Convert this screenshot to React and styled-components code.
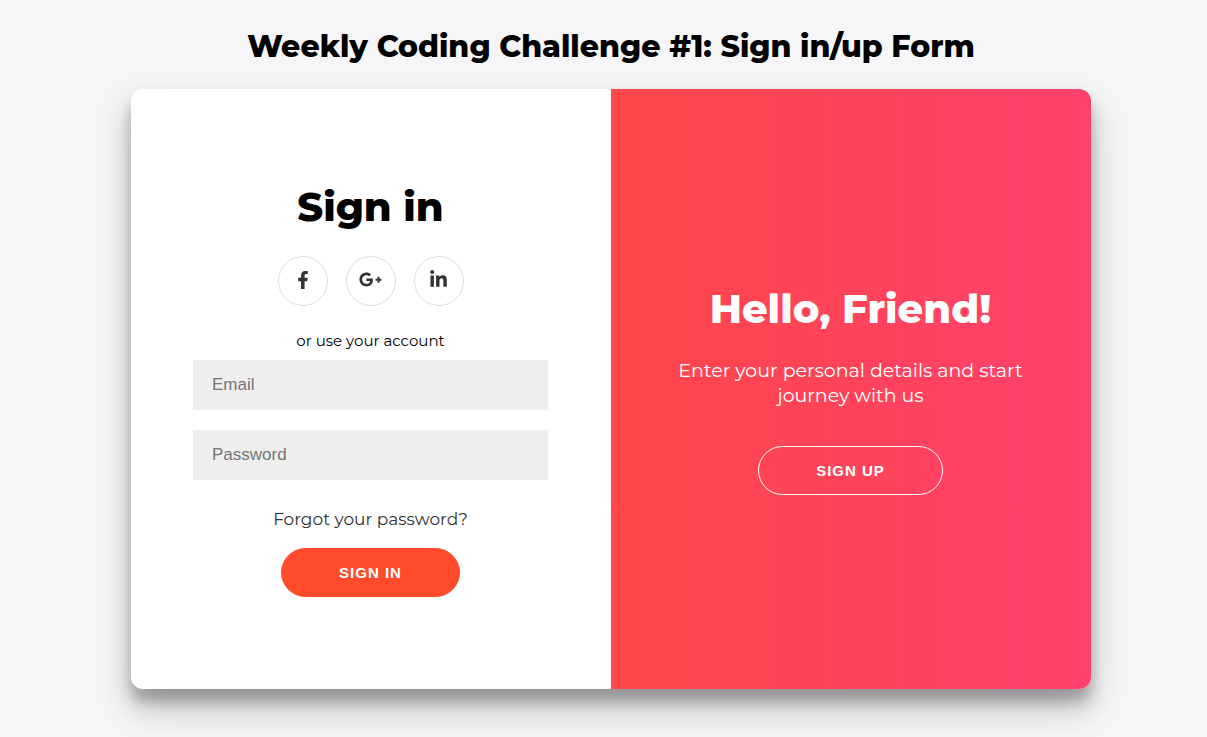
import React from "react";
import styled, { createGlobalStyle } from "styled-components";
import { FaFacebookF, FaGooglePlusG, FaLinkedinIn } from "react-icons/fa";

const GlobalStyle = createGlobalStyle`
  * {
    box-sizing: border-box;
  }

  body {
    margin: 0;
    background: #f6f6f9;
    color: #000;
    font-family: Montserrat, Inter, sans-serif;
  }
`;

const Page = styled.main`
  display: flex;
  flex-direction: column;
  align-items: center;
  min-height: 100vh;
  padding: 29px 0 48px 15px;
`;

const PageTitle = styled.h1`
  margin: 0 0 24px;
  font-size: 30px;
  font-weight: 800;
  line-height: 36px;
  text-align: center;
`;

const Card = styled.div`
  display: grid;
  grid-template-columns: 1fr 1fr;
  width: 100%;
  max-width: 960px;
  min-height: 600px;
  overflow: hidden;
  border-radius: 12px;
  background: #fff;
  box-shadow: 0 18px 35px rgba(0, 0, 0, 0.25), 0 13px 13px rgba(0, 0, 0, 0.22);
`;

const SignInForm = styled.form`
  display: flex;
  flex-direction: column;
  align-items: center;
  justify-content: center;
  padding: 0 63px 0 62px;
`;

const Overlay = styled.section`
  display: flex;
  flex-direction: column;
  align-items: center;
  justify-content: center;
  padding: 0 51px 0 50px;
  background: linear-gradient(to right, #ff4649, #ff416c);
  color: #fff;
  text-align: center;
`;

const Heading = styled.h2`
  margin: 0;
  font-size: 40px;
  font-weight: 800;
  line-height: 50px;
`;

const SocialList = styled.nav`
  display: flex;
  gap: 18px;
  margin: 24px 0 25px;
`;

const SocialLink = styled.a`
  display: flex;
  align-items: center;
  justify-content: center;
  width: 50px;
  height: 50px;
  padding-bottom: 2px;
  border: 1px solid #ddd;
  border-radius: 50%;
  color: #333;
`;

const Hint = styled.span`
  font-size: 15px;
  line-height: 19px;
`;

const Field = styled.input`
  width: 100%;
  height: 50px;
  margin: 10px 0;
  padding: 0 19px;
  border: 0;
  border-radius: 0;
  background: #eee;
  font-family: Arial, "Liberation Sans", sans-serif;
  font-size: 17px;

  &::placeholder {
    color: #757575;
  }
`;

const ForgotLink = styled.a`
  margin: 18px 0;
  color: #333;
  font-size: 17px;
  font-weight: 400;
  line-height: 22px;
  text-decoration: none;
`;

const Button = styled.button`
  height: 49px;
  padding: 0 57px;
  border: 1px solid ${({ $ghost }) => ($ghost ? "#fff" : "#ff4b2b")};
  border-radius: 25px;
  background: ${({ $ghost }) => ($ghost ? "transparent" : "#ff4b2b")};
  color: #fff;
  font-family: Arial, "Liberation Sans", sans-serif;
  font-size: 15px;
  font-weight: 700;
  letter-spacing: 1px;
  text-transform: uppercase;
  cursor: pointer;
`;

const Message = styled.p`
  margin: 24px 0 38px;
  font-size: 19px;
  line-height: 25px;
`;

export default function App() {
  return (
    <>
      <GlobalStyle />
      <Page>
        <PageTitle>Weekly Coding Challenge #1: Sign in/up Form</PageTitle>
        <Card>
          <SignInForm onSubmit={(event) => event.preventDefault()}>
            <Heading>Sign in</Heading>
            <SocialList aria-label="Social sign in">
              <SocialLink href="#facebook" aria-label="Facebook">
                <FaFacebookF size={18} />
              </SocialLink>
              <SocialLink href="#google" aria-label="Google Plus">
                <FaGooglePlusG size={23} />
              </SocialLink>
              <SocialLink href="#linkedin" aria-label="LinkedIn">
                <FaLinkedinIn size={19} />
              </SocialLink>
            </SocialList>
            <Hint>or use your account</Hint>
            <Field type="email" placeholder="Email" aria-label="Email" />
            <Field type="password" placeholder="Password" aria-label="Password" />
            <ForgotLink href="#forgot">Forgot your password?</ForgotLink>
            <Button type="submit">Sign In</Button>
          </SignInForm>
          <Overlay>
            <Heading>Hello, Friend!</Heading>
            <Message>Enter your personal details and start journey with us</Message>
            <Button type="button" $ghost>
              Sign Up
            </Button>
          </Overlay>
        </Card>
      </Page>
    </>
  );
}
